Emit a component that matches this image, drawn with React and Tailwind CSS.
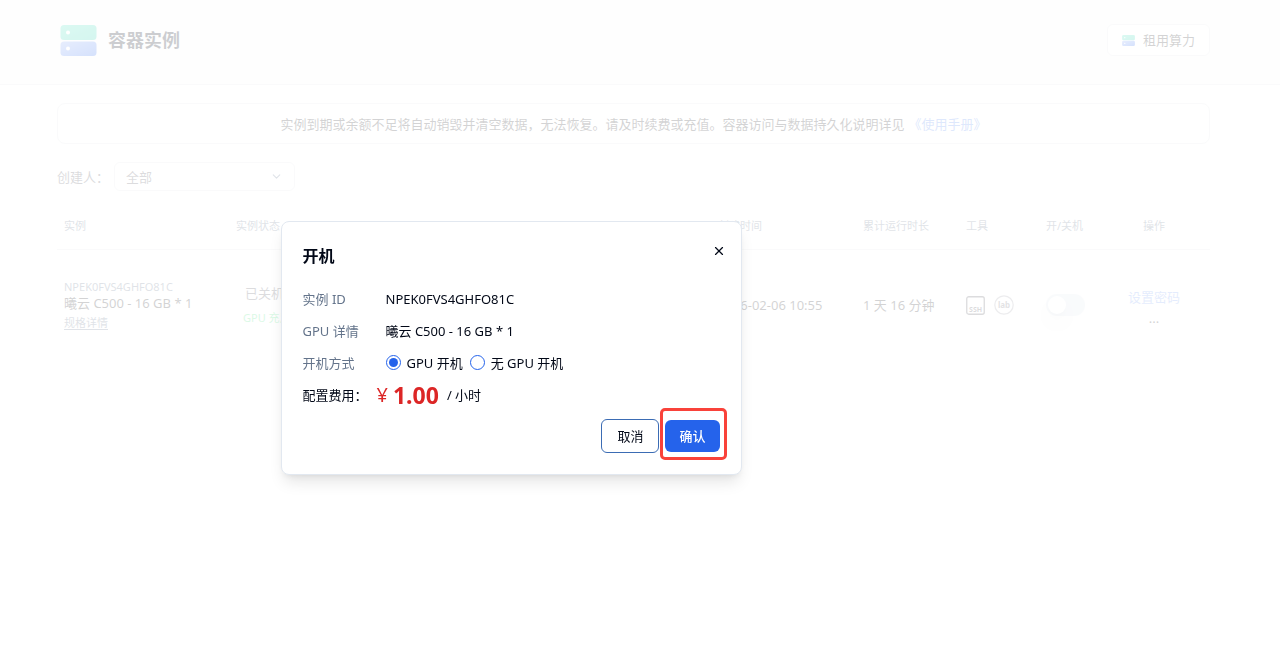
import React, { useState } from "react";
import { X, ChevronDown } from "lucide-react";

const instances = [
  {
    id: "NPEK0FVS4GHFO81C",
    spec: "曦云 C500 - 16 GB * 1",
    status: "已关机",
    stock: "GPU 充足",
    createdAt: "2026-02-06 10:55",
    runtime: "1 天 16 分钟",
  },
];

function ServerIcon({ className, id }) {
  return (
    <svg viewBox="0 0 36 31" className={className} aria-hidden="true">
      <defs>
        <linearGradient id={`${id}-top`} x1="0" y1="0" x2="1" y2="1">
          <stop offset="0" stopColor="#4be0be" />
          <stop offset="1" stopColor="#2fd0b0" />
        </linearGradient>
        <linearGradient id={`${id}-bottom`} x1="0" y1="0" x2="1" y2="1">
          <stop offset="0" stopColor="#86a6f5" />
          <stop offset="1" stopColor="#2f6bf0" />
        </linearGradient>
      </defs>
      <rect width="36" height="15" rx="3.5" fill={`url(#${id}-top)`} />
      <rect y="16.5" width="36" height="14.5" rx="3.5" fill={`url(#${id}-bottom)`} />
      <circle cx="7.5" cy="7.5" r="2" fill="#fff" />
      <circle cx="7.5" cy="23.5" r="2" fill="#fff" />
    </svg>
  );
}

function SshIcon() {
  return (
    <svg viewBox="0 0 19 19" className="w-[19px] h-[19px]" aria-label="SSH">
      <rect x="0.75" y="0.75" width="17.5" height="17.5" rx="2" fill="none" stroke="#52525b" strokeWidth="1.3" />
      <text x="9.6" y="15.8" textAnchor="middle" fontSize="7" fontWeight="700" fill="#52525b">SSH</text>
    </svg>
  );
}

function LabIcon() {
  return (
    <svg viewBox="0 0 20 20" className="w-5 h-5" aria-label="lab">
      <circle cx="10" cy="10" r="9.2" fill="none" stroke="#a1a1aa" strokeWidth="1.2" />
      <text x="10" y="12.5" textAnchor="middle" fontSize="8" fontWeight="700" fill="#71717a">lab</text>
    </svg>
  );
}

function Header() {
  return (
    <header className="h-[85px] pl-[60px] pr-[70px] flex items-center justify-between border-b border-gray-200 bg-[#f7f8fa]">
      <div className="flex items-center gap-[11px] pb-1">
        <ServerIcon id="logo" className="w-[37px] h-[31px]" />
        <h1 className="text-[18px] leading-6 font-bold">容器实例</h1>
      </div>
      <button className="h-8 mb-1 px-[14px] flex items-center gap-2 rounded-md border border-gray-200 bg-white text-[13px] leading-5 text-zinc-800">
        <ServerIcon id="rent" className="w-[13px] h-[11px]" />
        租用算力
      </button>
    </header>
  );
}

function InstanceTable() {
  return (
    <table className="w-full table-fixed text-left mt-3">
      <colgroup>
        <col className="w-[172px]" />
        <col />
        <col className="w-[145px]" />
        <col className="w-[103px]" />
        <col className="w-[80px]" />
        <col className="w-[59px]" />
        <col className="w-[112px]" />
      </colgroup>
      <thead>
        <tr className="h-[46px] border-b border-gray-200 text-[11px] leading-4 text-[#64748b]">
          <th className="pl-[7px] font-normal">实例</th>
          <th className="pl-[7px] font-normal">实例状态</th>
          <th className="pl-[7px] font-normal">创建时间</th>
          <th className="pl-[7px] font-normal">累计运行时长</th>
          <th className="pl-[7px] font-normal">工具</th>
          <th className="pl-[7px] font-normal">开/关机</th>
          <th className="text-center font-normal">操作</th>
        </tr>
      </thead>
      <tbody>
        {instances.map((item) => (
          <tr key={item.id} className="h-[112px] text-[13px] leading-4 text-zinc-800">
            <td className="pl-[7px]">
              <div className="text-[11px] leading-4 text-[#64748b] whitespace-nowrap">{item.id}</div>
              <div className="whitespace-nowrap">{item.spec}</div>
              <a href="#spec" className="block mt-1 text-[11px] leading-4 text-[#64748b] underline underline-offset-2">
                规格详情
              </a>
            </td>
            <td className="pl-[14px]">
              <div className="pl-[2px] text-zinc-600">{item.status}</div>
              <div className="mt-[9px] text-[11px] leading-4 text-[#4ade80]">{item.stock}</div>
            </td>
            <td className="pl-[7px] whitespace-nowrap">{item.createdAt}</td>
            <td className="pl-[7px] whitespace-nowrap">{item.runtime}</td>
            <td className="pl-[7px]">
              <div className="flex items-center gap-[9px]">
                <SshIcon />
                <LabIcon />
              </div>
            </td>
            <td className="pl-[7px]">
              <label className="relative block w-[39px] h-[22px]">
                <input type="checkbox" aria-label="开/关机" className="peer appearance-none block w-full h-full rounded-full bg-slate-200 checked:bg-blue-600" />
                <span className="absolute left-[2px] top-[2px] w-[18px] h-[18px] rounded-full bg-white shadow-lg peer-checked:left-[19px]" />
              </label>
            </td>
            <td className="text-center">
              <a href="#password" className="block mt-1 text-[#7ba2f3]">设置密码</a>
              <button className="block mx-auto mt-[5px] leading-4" aria-label="更多">...</button>
            </td>
          </tr>
        ))}
      </tbody>
    </table>
  );
}

function StartDialog() {
  const [mode, setMode] = useState("gpu");
  const radio =
    "appearance-none w-[15px] h-[15px] rounded-full border border-[#2563eb] p-[2px] bg-clip-content checked:bg-[#2563eb]";

  return (
    <div className="fixed inset-0 flex items-center justify-center pr-[258px] pt-[23px] bg-white/80">
      <div
        role="dialog"
        aria-labelledby="dialog-title"
        className="w-[461px] px-[21px] pt-6 pb-[21px] rounded-lg border border-slate-200 bg-white shadow-lg"
      >
        <div className="flex items-start justify-between">
          <h2 id="dialog-title" className="text-[16px] leading-5 font-bold">开机</h2>
          <button aria-label="关闭" className="-mr-[6px] -mt-[2px]">
            <X className="w-[14px] h-[14px]" />
          </button>
        </div>

        <dl className="mt-[17px] grid grid-cols-[83px_1fr] text-[13px] leading-8">
          <dt className="text-[#64748b]">实例 ID</dt>
          <dd>NPEK0FVS4GHFO81C</dd>
          <dt className="text-[#64748b]">GPU 详情</dt>
          <dd>曦云 C500 - 16 GB * 1</dd>
          <dt className="text-[#64748b]">开机方式</dt>
          <dd className="flex items-center gap-[7px]">
            <label className="flex items-center gap-[6px]">
              <input type="radio" name="mode" className={radio} checked={mode === "gpu"} onChange={() => setMode("gpu")} />
              GPU 开机
            </label>
            <label className="flex items-center gap-[6px]">
              <input type="radio" name="mode" className={radio} checked={mode === "cpu"} onChange={() => setMode("cpu")} />
              无 GPU 开机
            </label>
          </dd>
        </dl>

        <div className="flex items-center text-[13px] leading-8">
          <span className="w-[74px] whitespace-nowrap">配置费用：</span>
          <span className="text-[20px] text-[#dc2626] mr-[5px]">¥</span>
          <span className="text-[23px] font-bold text-[#dc2626] mr-2">1.00</span>
          <span>/ 小时</span>
        </div>

        <div className="mt-2 flex items-center justify-end gap-[6px] text-[13px] leading-5">
          <button className="h-[34px] px-[15px] rounded-md border border-[#3b6cb4] bg-white">取消</button>
          <div className="relative">
            <button className="block h-8 px-[14px] rounded-md bg-[#2563eb] text-white font-medium">确认</button>
            <span className="absolute -left-[5px] -right-[7px] -top-[12px] -bottom-[8px] rounded-[5px] border-[3px] border-[#f9423a] pointer-events-none" />
          </div>
        </div>
      </div>
    </div>
  );
}

export default function App() {
  return (
    <div className="min-h-screen bg-[#fcfcfc] text-[#020817] font-['Noto_Sans','Noto_Sans_CJK_SC',sans-serif]">
      <Header />
      <main className="pl-[57px] pr-[70px] pt-[18px]">
        <div className="h-[41px] flex items-center justify-center gap-1 rounded-lg border border-gray-200 text-[13px] leading-5 text-zinc-800">
          <p>实例到期或余额不足将自动销毁并清空数据，无法恢复。请及时续费或充值。容器访问与数据持久化说明详见</p>
          <a href="#manual" className="text-[#5b8af0]">《使用手册》</a>
        </div>

        <div className="mt-[18px] flex items-center text-[13px] leading-5">
          <label htmlFor="creator" className="w-[57px] whitespace-nowrap text-zinc-600">创建人：</label>
          <div className="relative w-[181px]">
            <select id="creator" className="appearance-none block w-full h-[29px] pl-[11px] rounded-md border border-gray-200 bg-white text-zinc-600">
              <option>全部</option>
            </select>
            <ChevronDown className="absolute right-3 top-2 w-[13px] h-[13px] text-slate-500 pointer-events-none" />
          </div>
        </div>

        <InstanceTable />
      </main>
      <StartDialog />
    </div>
  );
}
